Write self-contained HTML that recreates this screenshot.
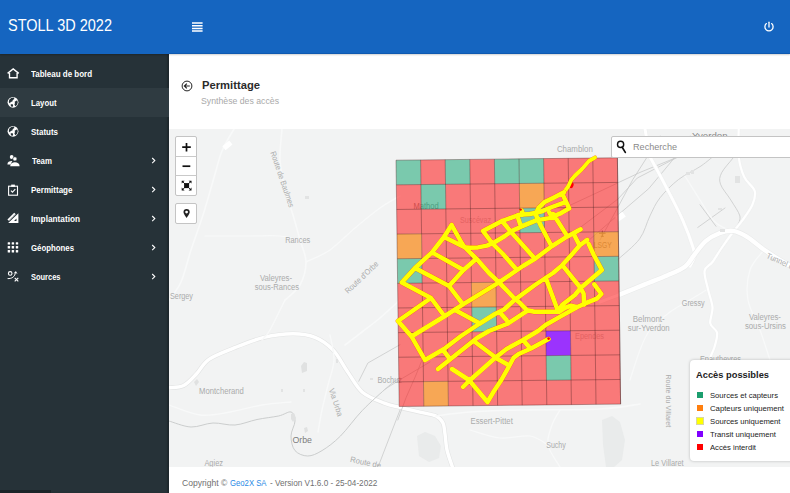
<!DOCTYPE html>
<html><head><meta charset="utf-8">
<style>
*{box-sizing:border-box;margin:0;padding:0}
html,body{width:790px;height:493px;overflow:hidden;background:#fff;font-family:"Liberation Sans",sans-serif;}
.t{position:absolute;white-space:pre;transform-origin:0 0;line-height:normal}
#hdr{position:absolute;left:0;top:0;width:790px;height:54px;background:#1565c0;box-shadow:0 1px 1.5px rgba(0,0,0,.18);z-index:5}
#side{position:absolute;left:0;top:54px;width:169px;height:439px;background:#263238;z-index:4;box-shadow:inset -2px 0 1.5px rgba(0,0,0,.22)}
#sel{position:absolute;left:0;top:34px;width:169px;height:29px;background:#2f3b41}
#map{position:absolute;left:169px;top:129px;width:621px;height:338px;background:#f2f3f3;overflow:hidden}
.ctl{position:absolute;background:#fff;border:1px solid #c4c4c4;border-radius:2px;z-index:2}
#legend{position:absolute;left:690px;top:360px;width:110px;height:101px;background:#fff;border-radius:4px;box-shadow:0 0 3px rgba(0,0,0,.25);z-index:2}
.sw{position:absolute;left:696.5px;width:6.6px;height:6.2px;z-index:3}
svg{position:absolute;overflow:visible}
</style></head><body>
<div id="hdr"><div style="position:absolute;left:169px;top:53px;width:621px;height:1px;background:#0f59b0"></div>
<svg style="left:192px;top:22px" width="11" height="10"><path d="M0 1.1h10.6M0 3.7h10.6M0 6.4h10.6M0 8.9h10.6" stroke="#fff" stroke-width="1.5" fill="none"/></svg>
<svg style="left:763px;top:21px" width="12" height="12"><path d="M3.4 2.6A4.1 4.1 0 1 0 8.6 2.6" stroke="#fff" stroke-width="1.3" fill="none" stroke-linecap="round"/><path d="M6 1.2V6" stroke="#fff" stroke-width="1.3" stroke-linecap="round"/></svg>
</div>
<div id="side"><div id="sel"></div><svg width="168" height="439" viewBox="0 54 168 439" style="left:0;top:0"><path d="M7.6 73.4L13.2 68.9L18.8 73.4M9.5 73V77.7H17.1V73" fill="none" stroke="#fff" stroke-width="1.35" stroke-linejoin="miter"/><circle cx="13" cy="102.3" r="5.4" fill="#fff"/><path d="M9.2 99.7l2-1.6l2.6 -0.6l0.6 1.4l-1.6 1l-0.4 1.6l-1.8 0.4l-0.6 1.6l-1.2-1.2z" fill="#263238"/><path d="M14.6 101.7l2.6-1.4l0.6 2l-0.8 2.6l-1.8 1.4l-0.8-1.8l0.6-1.4z" fill="#263238"/><path d="M10.6 104.5l1.8-0.4l0.8 1.4l-0.8 1.6l-1.4-0.8z" fill="#263238"/><circle cx="13" cy="131.3" r="5.4" fill="#fff"/><path d="M9.2 128.70000000000002l2-1.6l2.6 -0.6l0.6 1.4l-1.6 1l-0.4 1.6l-1.8 0.4l-0.6 1.6l-1.2-1.2z" fill="#263238"/><path d="M14.6 130.70000000000002l2.6-1.4l0.6 2l-0.8 2.6l-1.8 1.4l-0.8-1.8l0.6-1.4z" fill="#263238"/><path d="M10.6 133.5l1.8-0.4l0.8 1.4l-0.8 1.6l-1.4-0.8z" fill="#263238"/><circle cx="11.7" cy="157" r="1.9" fill="#fff"/><path d="M7.4 164.4c0-2.4 2-3.4 4.3-3.4l0.6 0.1l-1.8 3.3z" fill="#fff"/><circle cx="14.9" cy="158.9" r="2.1" fill="#fff" stroke="#263238" stroke-width="0.6"/><path d="M10.2 166.2c0-2.8 2.2-3.9 4.7-3.9s4.7 1.1 4.7 3.9z" fill="#fff"/><rect x="8.6" y="186.2" width="8.9" height="9" fill="none" stroke="#fff" stroke-width="1.1"/><rect x="11.2" y="184.6" width="3.7" height="2.2" fill="#fff"/><path d="M10.9 190.6l1.6 1.6l2.8-3.1" fill="none" stroke="#fff" stroke-width="1.1"/><path d="M8.2 223L18.4 213.2V223zM14 220.9h2.5v-2.5z" fill="#fff" fill-rule="evenodd"/><path d="M8.2 220.3L15 213.5" stroke="#fff" stroke-width="2.2"/><path d="M8.6 220.7L15.4 213.9" stroke="#263238" stroke-width="0.5" stroke-dasharray="0.6 0.6"/><rect x="7.7" y="242.20000000000002" width="2.4" height="2.4" rx="0.5" fill="#fff"/><rect x="7.7" y="246.10000000000002" width="2.4" height="2.4" rx="0.5" fill="#fff"/><rect x="7.7" y="250.10000000000002" width="2.4" height="2.4" rx="0.5" fill="#fff"/><rect x="11.700000000000001" y="242.20000000000002" width="2.4" height="2.4" rx="0.5" fill="#fff"/><rect x="11.700000000000001" y="246.10000000000002" width="2.4" height="2.4" rx="0.5" fill="#fff"/><rect x="11.700000000000001" y="250.10000000000002" width="2.4" height="2.4" rx="0.5" fill="#fff"/><rect x="15.8" y="242.20000000000002" width="2.4" height="2.4" rx="0.5" fill="#fff"/><rect x="15.8" y="246.10000000000002" width="2.4" height="2.4" rx="0.5" fill="#fff"/><rect x="15.8" y="250.10000000000002" width="2.4" height="2.4" rx="0.5" fill="#fff"/><circle cx="10.2" cy="273.4" r="1.8" fill="none" stroke="#fff" stroke-width="1.1"/><path d="M7.6 278.6c4 0.2 7.4-1.6 8-6.6M14.3 273.4l1.4-1.8l1.2 2" fill="none" stroke="#fff" stroke-width="1"/><path d="M14.7 277.8l3.6 3.6M18.3 277.8l-3.6 3.6" stroke="#fff" stroke-width="1.1"/><path d="M152.2 158.0l2.6 2.6l-2.6 2.6" fill="none" stroke="#fff" stroke-width="1.1"/><path d="M152.2 187.0l2.6 2.6l-2.6 2.6" fill="none" stroke="#fff" stroke-width="1.1"/><path d="M152.2 216.0l2.6 2.6l-2.6 2.6" fill="none" stroke="#fff" stroke-width="1.1"/><path d="M152.2 245.0l2.6 2.6l-2.6 2.6" fill="none" stroke="#fff" stroke-width="1.1"/><path d="M152.2 274.0l2.6 2.6l-2.6 2.6" fill="none" stroke="#fff" stroke-width="1.1"/></svg><div style="position:absolute;left:0;top:436px;width:51px;height:3px;background:#1b2428"></div></div>
<svg style="left:181px;top:79.5px;z-index:1" width="12" height="12"><circle cx="6" cy="6" r="4.9" fill="none" stroke="#222" stroke-width="1"/><path d="M8.8 6H3.6M5.8 3.6L3.4 6l2.4 2.4" fill="none" stroke="#222" stroke-width="1.2"/></svg>
<div id="map"><svg width="621" height="338" viewBox="169 129 621 338" style="left:0;top:0"><path d="M169 387.8C171.4 387.4 179.0 387.9 183.6 385.6C188.2 383.3 192.2 378.4 196.4 374C200.6 369.6 202.6 363.7 209 359.3C215.4 354.9 225.5 351.4 234.7 347.7C243.8 344.0 254.2 339.7 263.9 337.4C273.6 335.1 284.5 333.8 293 333.8C301.5 333.8 308.3 334.7 315 337.4C321.7 340.1 327.7 344.4 333.2 350.2C338.7 356.0 342.9 365.1 347.8 372.1C352.7 379.1 356.3 387.0 362.4 392.2C368.5 397.4 378.0 400.6 384.3 403.1C390.6 405.6 394.1 405.9 400 407.4C405.9 408.9 414.0 410.8 420 412.2C426.0 413.6 432.2 414.2 436 416C439.8 417.8 441.5 420.0 443 423C444.5 426.0 444.3 429.5 445 434C445.7 438.5 445.7 444.3 447 450C448.3 455.7 451.8 465.0 452.8 468" fill="none" stroke="#e3e4e4" stroke-width="4.6"/><path d="M169 387.8C171.4 387.4 179.0 387.9 183.6 385.6C188.2 383.3 192.2 378.4 196.4 374C200.6 369.6 202.6 363.7 209 359.3C215.4 354.9 225.5 351.4 234.7 347.7C243.8 344.0 254.2 339.7 263.9 337.4C273.6 335.1 284.5 333.8 293 333.8C301.5 333.8 308.3 334.7 315 337.4C321.7 340.1 327.7 344.4 333.2 350.2C338.7 356.0 342.9 365.1 347.8 372.1C352.7 379.1 356.3 387.0 362.4 392.2C368.5 397.4 378.0 400.6 384.3 403.1C390.6 405.6 394.1 405.9 400 407.4C405.9 408.9 414.0 410.8 420 412.2C426.0 413.6 432.2 414.2 436 416C439.8 417.8 441.5 420.0 443 423C444.5 426.0 444.3 429.5 445 434C445.7 438.5 445.7 444.3 447 450C448.3 455.7 451.8 465.0 452.8 468" fill="none" stroke="#fff" stroke-width="3.4"/><path d="M602 420l10-4l8 6l5 18l-3 20l-8 7h-8l-3-22z" fill="#e9ebeb"/><path d="M417 436l8-4l10 4l6 10l-2 12l-10 4l-10-6z" fill="#e6e7e7" opacity="0.7"/><path d="M600 240L618 207L632.8 179.6L646.5 158L660 136" fill="none" stroke="#c9caca" stroke-width="0.8" stroke-linecap="round"/><path d="M560 243L580.6 227.2L618 199L637.3 178L676 158L700 148" fill="none" stroke="#c9caca" stroke-width="0.8" stroke-linecap="round"/><path d="M560 210L602.8 190L640 172.4L667 161.4L720 140" fill="none" stroke="#c9caca" stroke-width="0.8" stroke-linecap="round"/><path d="M570 256L588.7 240.4L618 215L648.7 188.7L671.5 161.4L690 136" fill="none" stroke="#c9caca" stroke-width="0.8" stroke-linecap="round"/><path d="M618 259.4C621.6 256.0 634.3 246.1 639.6 238.9C644.9 231.7 646.5 222.8 649.9 216C653.3 209.2 655.2 203.9 660 197.8C664.8 191.7 671.6 184.9 678.4 179.6C685.2 174.3 694.7 170.3 701 166C707.3 161.7 713.5 156.0 716 154" fill="none" stroke="#c9caca" stroke-width="0.8" stroke-linecap="round"/><path d="M738 150C737.2 151.3 735.7 154.2 733 158C730.3 161.8 723.7 168.4 721.6 172.8C719.5 177.2 719.0 179.7 720.5 184.2C722.0 188.7 727.6 194.7 730.8 200C734.0 205.3 738.8 211.8 739.9 216C741.0 220.2 738.0 223.5 737.6 225" fill="none" stroke="#c9caca" stroke-width="0.8" stroke-linecap="round"/><path d="M700 204.7L716 226.3" fill="none" stroke="#c9caca" stroke-width="0.8" stroke-linecap="round"/><path d="M697.7 227.5L725 208" fill="none" stroke="#c9caca" stroke-width="0.8" stroke-linecap="round"/><path d="M169 421C172.7 422.0 183.7 426.7 191 427C198.3 427.3 205.7 423.3 213 423C220.3 422.7 227.7 425.6 235 425C242.3 424.4 249.8 421.0 257 419.5C264.2 418.0 272.8 417.2 278.5 416C284.2 414.8 288.2 411.2 291 412C293.8 412.8 295.0 417.0 295 421C295.0 425.0 291.0 431.1 291 436C291.0 440.9 292.2 447.3 295 450.6C297.8 453.9 303.2 456.0 307.7 456C312.2 456.0 316.5 453.9 322 450.6C327.5 447.3 333.8 442.7 340.5 436C347.2 429.3 354.5 418.6 362.4 410.4C370.3 402.2 381.7 392.2 388 386.7C394.3 381.2 398.0 379.1 400 377.6" fill="none" stroke="#c6c8c8" stroke-width="0.9" stroke-linecap="round"/><path d="M358.8 381.2L367.9 363L400 344.7" fill="none" stroke="#c9caca" stroke-width="0.8" stroke-linecap="round"/><path d="M400 410L378.8 465L376 470" fill="none" stroke="#c9caca" stroke-width="0.8" stroke-linecap="round"/><path d="M385 389.2L401 379.1L430 362" fill="none" stroke="#c9caca" stroke-width="0.8" stroke-linecap="round"/><path d="M397.8 420L406 397.8L416 375L424 355" fill="none" stroke="#c9caca" stroke-width="0.8" stroke-linecap="round"/><path d="M169 300C171.0 297.0 177.3 290.3 181 282C184.7 273.7 187.3 261.2 191 250C194.7 238.8 199.2 226.8 203 215C206.8 203.2 210.4 189.7 213.6 179C216.8 168.3 218.6 159.3 222 151C225.4 142.7 232.0 132.7 234 129" fill="none" stroke="#f8f9f9" stroke-width="1.6" stroke-linecap="round"/><path d="M282 129C281.7 134.2 279.5 149.8 280 160C280.5 170.2 282.8 180.8 285 190C287.2 199.2 290.5 206.7 293 215C295.5 223.3 297.8 232.2 300 240C302.2 247.8 306.0 254.5 306 262C306.0 269.5 303.5 278.7 300 285C296.5 291.3 287.5 297.5 285 300" fill="none" stroke="#f8f9f9" stroke-width="1.6" stroke-linecap="round"/><path d="M306 262C310.0 260.0 321.8 255.7 330 250C338.2 244.3 346.7 235.0 355 228C363.3 221.0 372.5 213.3 380 208C387.5 202.7 396.7 198.0 400 196" fill="none" stroke="#f8f9f9" stroke-width="1.4" stroke-linecap="round"/><path d="M285 300C282.5 305.0 273.8 323.3 270 330C266.2 336.7 263.3 338.3 262 340" fill="none" stroke="#f8f9f9" stroke-width="1.4" stroke-linecap="round"/><path d="M400 300C396.7 303.0 386.3 312.7 380 318C373.7 323.3 367.8 327.5 362 332C356.2 336.5 347.8 342.8 345 345" fill="none" stroke="#f8f9f9" stroke-width="1.6" stroke-linecap="round"/><path d="M300 240C296.7 239.3 288.3 236.7 280 236C271.7 235.3 262.5 236.0 250 236C237.5 236.0 212.5 236.0 205 236" fill="none" stroke="#f8f9f9" stroke-width="1.2" stroke-linecap="round"/><path d="M330 335C330.7 339.2 334.3 351.7 334 360C333.7 368.3 330.0 376.7 328 385C326.0 393.3 323.7 402.2 322 410C320.3 417.8 318.7 428.3 318 432" fill="none" stroke="#f8f9f9" stroke-width="1.4" stroke-linecap="round"/><path d="M169 405C174.2 406.7 189.8 413.8 200 415C210.2 416.2 219.7 413.7 230 412C240.3 410.3 251.8 406.7 262 405C272.2 403.3 286.2 402.5 291 402" fill="none" stroke="#f8f9f9" stroke-width="1.3" stroke-linecap="round"/><path d="M436 416C441.7 415.3 456.0 413.0 470 412C484.0 411.0 498.3 410.5 520 410C541.7 409.5 580.0 410.0 600 409C620.0 408.0 633.3 404.8 640 404" fill="none" stroke="#f8f9f9" stroke-width="1.6" stroke-linecap="round"/><path d="M560 410C558.7 412.5 554.0 419.2 552 425C550.0 430.8 546.7 438.0 548 445C549.3 452.0 558.0 463.3 560 467" fill="none" stroke="#f8f9f9" stroke-width="1.3" stroke-linecap="round"/><path d="M470 430C475.0 431.3 490.0 437.0 500 438C510.0 439.0 522.0 434.8 530 436C538.0 437.2 545.0 443.5 548 445" fill="none" stroke="#f8f9f9" stroke-width="1.2" stroke-linecap="round"/><path d="M685 176C687.5 180.0 695.0 192.3 700 200C705.0 207.7 709.5 216.7 715 222C720.5 227.3 730.0 230.3 733 232" fill="none" stroke="#f8f9f9" stroke-width="1.3" stroke-linecap="round"/><path d="M764 250C761.7 253.3 752.7 261.7 750 270C747.3 278.3 746.3 290.0 748 300C749.7 310.0 756.3 320.0 760 330C763.7 340.0 768.3 355.0 770 360" fill="none" stroke="#f8f9f9" stroke-width="1.3" stroke-linecap="round"/><path d="M708 289C705.0 290.8 696.3 296.2 690 300C683.7 303.8 676.7 307.0 670 312C663.3 317.0 655.0 323.7 650 330C645.0 336.3 643.3 341.7 640 350C636.7 358.3 631.7 375.0 630 380" fill="none" stroke="#f8f9f9" stroke-width="1.2" stroke-linecap="round"/><path d="M649.9 156.8C652.8 162.1 661.5 178.1 667 188.7C672.5 199.3 678.5 210.7 682.9 220.6C687.3 230.5 691.3 241.9 693.2 248C695.1 254.1 694.8 254.1 694.3 257.1C693.8 260.1 690.7 264.5 690 266" fill="none" stroke="#eeefef" stroke-width="4.2"/><path d="M649.9 156.8C652.8 162.1 661.5 178.1 667 188.7C672.5 199.3 678.5 210.7 682.9 220.6C687.3 230.5 691.3 241.9 693.2 248C695.1 254.1 694.8 254.1 694.3 257.1C693.8 260.1 690.7 264.5 690 266" fill="none" stroke="#fff" stroke-width="3.0" stroke-linecap="round"/><path d="M645 129C645.8 133.6 649.1 152.2 649.9 156.8" fill="none" stroke="#eeefef" stroke-width="4.2"/><path d="M645 129C645.8 133.6 649.1 152.2 649.9 156.8" fill="none" stroke="#fff" stroke-width="3.0" stroke-linecap="round"/><path d="M738.7 129C738.7 133.6 737.8 148.8 738.7 156.8C739.7 164.9 741.7 171.6 744.4 177.3C747.1 183.0 753.4 186.4 754.7 191C756.0 195.6 754.5 199.8 752.4 204.7C750.3 209.6 745.4 216.0 742.2 220.6C739.0 225.2 736.4 227.4 733 232C729.6 236.6 725.0 243.0 721.6 248C718.2 253.0 715.3 258.2 712.5 262C709.7 265.8 705.4 266.5 704.6 271C703.9 275.5 706.7 283.1 708 289.2C709.3 295.3 712.1 301.7 712.5 307.4C712.9 313.1 709.5 319.2 710.3 323.4C711.0 327.6 716.2 328.7 717 332.5C717.8 336.3 715.9 341.8 714.8 346C713.7 350.2 711.8 353.2 710.3 357.5C708.8 361.8 706.7 369.6 706 372" fill="none" stroke="#eff0f0" stroke-width="3.4000000000000004"/><path d="M738.7 129C738.7 133.6 737.8 148.8 738.7 156.8C739.7 164.9 741.7 171.6 744.4 177.3C747.1 183.0 753.4 186.4 754.7 191C756.0 195.6 754.5 199.8 752.4 204.7C750.3 209.6 745.4 216.0 742.2 220.6C739.0 225.2 736.4 227.4 733 232C729.6 236.6 725.0 243.0 721.6 248C718.2 253.0 715.3 258.2 712.5 262C709.7 265.8 705.4 266.5 704.6 271C703.9 275.5 706.7 283.1 708 289.2C709.3 295.3 712.1 301.7 712.5 307.4C712.9 313.1 709.5 319.2 710.3 323.4C711.0 327.6 716.2 328.7 717 332.5C717.8 336.3 715.9 341.8 714.8 346C713.7 350.2 711.8 353.2 710.3 357.5C708.8 361.8 706.7 369.6 706 372" fill="none" stroke="#fff" stroke-width="2.2" stroke-linecap="round"/><path d="M619 294.9C623.2 293.2 636.2 287.8 644.2 284.6C652.2 281.4 660.2 278.5 667 275.5C673.8 272.5 680.7 269.8 685.2 266.4C689.8 262.9 690.9 259.0 694.3 254.8C697.7 250.6 701.5 244.7 705.7 241.1C709.9 237.5 714.9 234.9 719.4 233.2C723.9 231.5 728.5 230.3 733 230.9C737.5 231.5 741.4 233.4 746.7 236.6C752.0 239.8 758.8 246.1 764.9 250.3C771.0 254.5 778.2 259.1 783.2 262C788.2 264.9 793.0 267.0 795 268" fill="none" stroke="#eaebeb" stroke-width="5.6000000000000005"/><path d="M619 294.9C623.2 293.2 636.2 287.8 644.2 284.6C652.2 281.4 660.2 278.5 667 275.5C673.8 272.5 680.7 269.8 685.2 266.4C689.8 262.9 690.9 259.0 694.3 254.8C697.7 250.6 701.5 244.7 705.7 241.1C709.9 237.5 714.9 234.9 719.4 233.2C723.9 231.5 728.5 230.3 733 230.9C737.5 231.5 741.4 233.4 746.7 236.6C752.0 239.8 758.8 246.1 764.9 250.3C771.0 254.5 778.2 259.1 783.2 262C788.2 264.9 793.0 267.0 795 268" fill="none" stroke="#fff" stroke-width="4.4" stroke-linecap="round"/><path d="M600 302C603.2 300.8 615.8 296.1 619 294.9" fill="none" stroke="#eeefef" stroke-width="4.2"/><path d="M600 302C603.2 300.8 615.8 296.1 619 294.9" fill="none" stroke="#fff" stroke-width="3.0" stroke-linecap="round"/><rect x="223" y="143" width="9" height="5" fill="#fff" transform="rotate(-40 227.3 145.6)"/><rect x="616" y="214" width="9" height="6" fill="#fff" transform="rotate(-35 620 217)"/><rect x="305" y="196" width="4" height="3" fill="#e2e3e3"/><rect x="686" y="172" width="4" height="3" fill="#e2e3e3"/><rect x="691" y="170" width="3" height="4" fill="#e2e3e3"/><rect x="735" y="176" width="5" height="7" fill="#e2e3e3"/><rect x="720" y="229" width="5" height="3" fill="#e2e3e3"/><rect x="718" y="208" width="4" height="2" fill="#e2e3e3"/><rect x="281" y="389" width="2" height="3" fill="#e2e3e3"/><rect x="303" y="389" width="2" height="3" fill="#e2e3e3"/><rect x="370" y="378" width="3" height="2" fill="#e2e3e3"/><rect x="336" y="359" width="2" height="4" fill="#e2e3e3"/><path d="M301 366l3-4l3 1l0 8l-5 2zM194 382l3-3l2 3l-3 4zM291 414l3-1l2 5l-3 4l-2-3zM304 428l3-1l1 4l-3 2z" fill="#e0e1e1"/><g font-family="Liberation Sans,sans-serif"><text x="285.2" y="242.6" font-size="8.4" fill="#aaabab" textLength="25.0" lengthAdjust="spacingAndGlyphs">Rances</text><text x="259.9" y="281.0" font-size="8.4" fill="#aaabab" textLength="32.1" lengthAdjust="spacingAndGlyphs">Valeyres-</text><text x="254.7" y="290.2" font-size="8.4" fill="#aaabab" textLength="44.3" lengthAdjust="spacingAndGlyphs">sous-Rances</text><text x="170" y="298.5" font-size="8.4" fill="#aaabab" textLength="23.0" lengthAdjust="spacingAndGlyphs">Sergey</text><text x="0" y="2.9" font-size="8.0" fill="#aaabab" textLength="58.7" lengthAdjust="spacingAndGlyphs" transform="translate(273 151.5) rotate(71.1)">Route de Baulmes</text><text x="0" y="2.9" font-size="8.0" fill="#aaabab" textLength="42.8" lengthAdjust="spacingAndGlyphs" transform="translate(346 292) rotate(-43.6)">Route d'Orbe</text><text x="199" y="393.7" font-size="8.4" fill="#aaabab" textLength="44.8" lengthAdjust="spacingAndGlyphs">Montcherand</text><text x="0" y="2.9" font-size="8.0" fill="#aaabab" textLength="29.0" lengthAdjust="spacingAndGlyphs" transform="translate(331.4 388.5) rotate(71.7)">Via Urba</text><text x="292.4" y="442.9" font-size="9.3" fill="#7d7d7d" textLength="19.6" lengthAdjust="spacingAndGlyphs">Orbe</text><text x="204.4" y="465.6" font-size="8.4" fill="#aaabab" textLength="18.6" lengthAdjust="spacingAndGlyphs">Agiez</text><text x="0" y="2.9" font-size="8.0" fill="#aaabab" textLength="31.3" lengthAdjust="spacingAndGlyphs" transform="translate(350.4 459) rotate(12.0)">Route de</text><text x="377.4" y="382.8" font-size="8.4" fill="#aaabab" textLength="24.6" lengthAdjust="spacingAndGlyphs">Bochuz</text><text x="470.5" y="423.5" font-size="8.4" fill="#aaabab" textLength="42.3" lengthAdjust="spacingAndGlyphs">Essert-Pittet</text><text x="546.2" y="447.8" font-size="8.4" fill="#aaabab" textLength="19.6" lengthAdjust="spacingAndGlyphs">Suchy</text><text x="651" y="465.5" font-size="8.4" fill="#aaabab" textLength="32.6" lengthAdjust="spacingAndGlyphs">Le Villaret</text><text x="0" y="2.9" font-size="8.0" fill="#aaabab" textLength="52.9" lengthAdjust="spacingAndGlyphs" transform="translate(668.5 374.4) rotate(90.0)">Route du Villaret</text><text x="681.8" y="306.3" font-size="8.4" fill="#aaabab" textLength="22.8" lengthAdjust="spacingAndGlyphs">Gressy</text><text x="632.8" y="321.8" font-size="8.4" fill="#aaabab" textLength="31.9" lengthAdjust="spacingAndGlyphs">Belmont-</text><text x="627.8" y="330.5" font-size="8.4" fill="#aaabab" textLength="41.9" lengthAdjust="spacingAndGlyphs">sur-Yverdon</text><text x="749" y="320.0" font-size="8.4" fill="#aaabab" textLength="31.9" lengthAdjust="spacingAndGlyphs">Valeyres-</text><text x="744.9" y="328.6" font-size="8.4" fill="#aaabab" textLength="41.0" lengthAdjust="spacingAndGlyphs">sous-Ursins</text><text x="700" y="362.4" font-size="8.4" fill="#aaabab" textLength="41.0" lengthAdjust="spacingAndGlyphs">Epautheyres</text><text x="0" y="2.9" font-size="8.0" fill="#aaabab" textLength="32.9" lengthAdjust="spacingAndGlyphs" transform="translate(767 255) rotate(24.2)">Tunnel de</text><text x="556.9" y="151.7" font-size="8.4" fill="#aaabab" textLength="35.9" lengthAdjust="spacingAndGlyphs">Chamblon</text><text x="413.4" y="208.5" font-size="8.4" fill="#9a9a9a" textLength="25.2" lengthAdjust="spacingAndGlyphs">Mathod</text><text x="460" y="223.0" font-size="8.4" fill="#c6c6c6" textLength="31.0" lengthAdjust="spacingAndGlyphs">Suscévaz</text><text x="593.8" y="247.8" font-size="8.4" fill="#8e8e8e" textLength="17.9" lengthAdjust="spacingAndGlyphs">LSGY</text><text x="575" y="339.0" font-size="8.4" fill="#c6c6c6" textLength="29.0" lengthAdjust="spacingAndGlyphs">Ependes</text><path d="M602.3 230.5v6M599 233.3h6.6M600.8 236.3h3" stroke="#8e8e8e" stroke-width="1" fill="none"/><text x="692" y="138.8" font-size="9.6" fill="#8a8a8a" textLength="38.8" lengthAdjust="spacingAndGlyphs">Yverdon-</text></g><g transform="matrix(24.6000,-0.2667,0.3200,24.6300,396.0,160.2)"><path d="M1 0h1v1h-1zM3 0h1v1h-1zM6 0h1v1h-1zM7 0h1v1h-1zM8 0h1v1h-1zM0 1h1v1h-1zM2 1h1v1h-1zM3 1h1v1h-1zM4 1h1v1h-1zM6 1h1v1h-1zM7 1h1v1h-1zM8 1h1v1h-1zM0 2h1v1h-1zM1 2h1v1h-1zM2 2h1v1h-1zM3 2h1v1h-1zM4 2h1v1h-1zM6 2h1v1h-1zM7 2h1v1h-1zM8 2h1v1h-1zM1 3h1v1h-1zM2 3h1v1h-1zM3 3h1v1h-1zM4 3h1v1h-1zM5 3h1v1h-1zM6 3h1v1h-1zM7 3h1v1h-1zM1 4h1v1h-1zM2 4h1v1h-1zM3 4h1v1h-1zM4 4h1v1h-1zM5 4h1v1h-1zM6 4h1v1h-1zM7 4h1v1h-1zM0 5h1v1h-1zM1 5h1v1h-1zM2 5h1v1h-1zM4 5h1v1h-1zM5 5h1v1h-1zM6 5h1v1h-1zM7 5h1v1h-1zM8 5h1v1h-1zM0 6h1v1h-1zM1 6h1v1h-1zM2 6h1v1h-1zM4 6h1v1h-1zM5 6h1v1h-1zM6 6h1v1h-1zM7 6h1v1h-1zM8 6h1v1h-1zM0 7h1v1h-1zM1 7h1v1h-1zM2 7h1v1h-1zM3 7h1v1h-1zM4 7h1v1h-1zM5 7h1v1h-1zM7 7h1v1h-1zM8 7h1v1h-1zM0 8h1v1h-1zM1 8h1v1h-1zM2 8h1v1h-1zM3 8h1v1h-1zM4 8h1v1h-1zM5 8h1v1h-1zM7 8h1v1h-1zM8 8h1v1h-1zM0 9h1v1h-1zM2 9h1v1h-1zM3 9h1v1h-1zM4 9h1v1h-1zM5 9h1v1h-1zM6 9h1v1h-1zM7 9h1v1h-1zM8 9h1v1h-1z" fill="#ff0000" fill-opacity="0.5"/><rect x="0" y="0" width="1" height="1" fill="#029f67" fill-opacity="0.5"/><rect x="2" y="0" width="1" height="1" fill="#029f67" fill-opacity="0.5"/><rect x="4" y="0" width="1" height="1" fill="#029f67" fill-opacity="0.5"/><rect x="5" y="0" width="1" height="1" fill="#029f67" fill-opacity="0.5"/><rect x="1" y="1" width="1" height="1" fill="#029f67" fill-opacity="0.5"/><rect x="5" y="2" width="1" height="1" fill="#029f67" fill-opacity="0.5"/><rect x="0" y="4" width="1" height="1" fill="#029f67" fill-opacity="0.5"/><rect x="8" y="4" width="1" height="1" fill="#029f67" fill-opacity="0.5"/><rect x="3" y="6" width="1" height="1" fill="#029f67" fill-opacity="0.5"/><rect x="6" y="8" width="1" height="1" fill="#029f67" fill-opacity="0.5"/><rect x="5" y="1" width="1" height="1" fill="#f98611" fill-opacity="0.7"/><rect x="0" y="3" width="1" height="1" fill="#f98611" fill-opacity="0.7"/><rect x="8" y="3" width="1" height="1" fill="#f98611" fill-opacity="0.7"/><rect x="3" y="5" width="1" height="1" fill="#f98611" fill-opacity="0.7"/><rect x="1" y="9" width="1" height="1" fill="#f98611" fill-opacity="0.7"/><rect x="6" y="7" width="1" height="1" fill="#8403ff" fill-opacity="0.8"/><path d="M0 0V10M1 0V10M2 0V10M3 0V10M4 0V10M5 0V10M6 0V10M7 0V10M8 0V10M9 0V10M0 0H9M0 1H9M0 2H9M0 3H9M0 4H9M0 5H9M0 6H9M0 7H9M0 8H9M0 9H9M0 10H9M9 0V10" fill="none" stroke="#4a1f1f" stroke-opacity="0.45" stroke-width="0.034"/></g><ellipse cx="571.3" cy="185.3" rx="2.2" ry="3" fill="#ff0000" transform="rotate(20 571.3 185.3)"/><path d="M595 157.6L589 161L582 169L574.6 176L571.2 180L568.2 186.5L564 192.2" fill="none" stroke="#ff0000" stroke-opacity="0.5" stroke-width="4.3" stroke-linecap="round" stroke-linejoin="round"/><path d="M595 157.6L589 161L582 169L574.6 176L571.2 180L568.2 186.5L564 192.2" fill="none" stroke="#ffff00" stroke-width="3.9" stroke-linecap="round" stroke-linejoin="round"/><path d="M564 192.2L554 197.4L544.2 202.3L538.8 207.6L535.5 214L541 226L551.2 245.5M562.7 194.6L569.2 208.4M483 231L502 221L520 214.7L530 214L541 211.6L552 207L566.1 201.9M569.2 208.4L559.9 213.7L549.3 218.1L536.2 220.4L521 226.7L511.5 231.1L505 236L494.5 242.2L487 245.6L478 247.4L470 247.8L464.5 247.3M521.7 210.5L523 214.7M483 231L492 243L503 254L517 270M502 221L511.5 232.4L535 258.8M517.2 215.3L521 226.7M549.3 212.4L552.6 218M553.2 214L567.4 236.4M411.5 336.5L445 316L463 304.4L499 282.4L523 266L535.5 258.5L552.2 246L567.4 236.4L580.6 229.3M425 360L444 349L461 336L479 324L495 314L504 309.5L515 299.6L535 285L553 273L562.3 265.1L571.4 255L579.6 245.5L587.2 239.9M574.5 235.4L579.6 245.5M451.6 225L444 237L432 252.4L415 268L401.8 282.6M444 237L464.2 247M432 252.4L463.5 270M415 268L449 286M401.8 282.6L431 298L444 315.5M431 298L398 321L411.5 336.5L425 360M451.6 225L462 243.5L464.5 247L476.5 258.8L489 273L499 282.4L515 299L519.1 302.2L527.2 310.3L534.3 311.8L557.7 311.8L562.3 304.7L574.9 295L580.6 288L601.9 270L593.8 255L588.7 244M476.5 258.8L463.5 270L449 286L463 304.4M562.3 265.1L580.6 288L583.6 293.5L584.1 304.7M546.1 278.8L557.7 310.3M499.5 312L506.5 320M455 310L479 323M438 369L477 338L489 331L507 324L527.2 310.8M443 350L450 359M475 342L495 357M594.3 284.4L601.4 294L596.8 298.6L584.6 303.7L576.9 307.2L560.7 316.4L545.5 325L538 331L523 340L506.5 349L495 358L469 381L463 387M559 311.8L565 307.8L571 305.6L576.5 307M452 369L469 380L487.5 402M487.5 402L494 391L501 380.5L509.2 366L513.6 357.8L518.6 354L531 348.5L548.5 339M495 357.6L509.3 365.4M523 340L530 348" fill="none" stroke="#ff0000" stroke-opacity="0.5" stroke-width="4.9" stroke-linecap="round" stroke-linejoin="round"/><path d="M564 192.2L554 197.4L544.2 202.3L538.8 207.6L535.5 214L541 226L551.2 245.5M562.7 194.6L569.2 208.4M483 231L502 221L520 214.7L530 214L541 211.6L552 207L566.1 201.9M569.2 208.4L559.9 213.7L549.3 218.1L536.2 220.4L521 226.7L511.5 231.1L505 236L494.5 242.2L487 245.6L478 247.4L470 247.8L464.5 247.3M521.7 210.5L523 214.7M483 231L492 243L503 254L517 270M502 221L511.5 232.4L535 258.8M517.2 215.3L521 226.7M549.3 212.4L552.6 218M553.2 214L567.4 236.4M411.5 336.5L445 316L463 304.4L499 282.4L523 266L535.5 258.5L552.2 246L567.4 236.4L580.6 229.3M425 360L444 349L461 336L479 324L495 314L504 309.5L515 299.6L535 285L553 273L562.3 265.1L571.4 255L579.6 245.5L587.2 239.9M574.5 235.4L579.6 245.5M451.6 225L444 237L432 252.4L415 268L401.8 282.6M444 237L464.2 247M432 252.4L463.5 270M415 268L449 286M401.8 282.6L431 298L444 315.5M431 298L398 321L411.5 336.5L425 360M451.6 225L462 243.5L464.5 247L476.5 258.8L489 273L499 282.4L515 299L519.1 302.2L527.2 310.3L534.3 311.8L557.7 311.8L562.3 304.7L574.9 295L580.6 288L601.9 270L593.8 255L588.7 244M476.5 258.8L463.5 270L449 286L463 304.4M562.3 265.1L580.6 288L583.6 293.5L584.1 304.7M546.1 278.8L557.7 310.3M499.5 312L506.5 320M455 310L479 323M438 369L477 338L489 331L507 324L527.2 310.8M443 350L450 359M475 342L495 357M594.3 284.4L601.4 294L596.8 298.6L584.6 303.7L576.9 307.2L560.7 316.4L545.5 325L538 331L523 340L506.5 349L495 358L469 381L463 387M559 311.8L565 307.8L571 305.6L576.5 307M452 369L469 380L487.5 402M487.5 402L494 391L501 380.5L509.2 366L513.6 357.8L518.6 354L531 348.5L548.5 339M495 357.6L509.3 365.4M523 340L530 348" fill="none" stroke="#ffff00" stroke-width="4.5" stroke-linecap="round" stroke-linejoin="round"/><circle cx="520.6" cy="209.6" r="1.2" fill="#ff0000"/><circle cx="548.6" cy="338.6" r="1.3" fill="#ff0000"/></svg></div>
<div class="ctl" style="left:175px;top:136px;width:22px;height:60px"></div>
<div class="ctl" style="left:175px;top:203px;width:22px;height:21px"></div>
<div class="ctl" style="left:611px;top:136px;width:181px;height:21.5px"></div>
<svg width="790" height="493" style="left:0;top:0;z-index:3;pointer-events:none"><path d="M182.2 147.2h8.6M186.5 142.9v8.6" stroke="#111" stroke-width="1.7"/><path d="M182.5 166.2h7.8" stroke="#111" stroke-width="1.7"/><path d="M175.5 156.5h21M175.5 175.5h21" stroke="#c9c9c9" stroke-width="1"/><path d="M182.6 181.6l8 8M190.6 181.6l-8 8" stroke="#111" stroke-width="0.9"/><rect x="184.1" y="183.1" width="5" height="5" fill="#111"/><path d="M181.7 180.7h2.9l-2.9 2.9zM191.5 180.7h-2.9l2.9 2.9zM181.7 190.5h2.9l-2.9-2.9zM191.5 190.5h-2.9l2.9-2.9z" fill="#111"/><path d="M186.6 209a3.1 3.1 0 0 1 3.1 3.1c0 2.2-3.1 5.9-3.1 5.9s-3.1-3.7-3.1-5.9a3.1 3.1 0 0 1 3.1-3.1z" fill="#222"/><circle cx="186.6" cy="212.1" r="1.4" fill="#fff"/><circle cx="620.6" cy="144.4" r="3.1" fill="none" stroke="#111" stroke-width="1.4"/><path d="M622.2 147.2l3.1 5.2" stroke="#111" stroke-width="1.7" stroke-linecap="round"/></svg>
<div id="legend"></div>
<div class="sw" style="top:392px;background:#1b9e6e"></div>
<div class="sw" style="top:405px;background:#ff7f0e"></div>
<div class="sw" style="top:417.9px;background:#ffff00;outline:0.5px solid #d8d8a0"></div>
<div class="sw" style="top:430.8px;background:#8000ff"></div>
<div class="sw" style="top:443.6px;background:#ff0000"></div>
<span class="t" style="left:7.6px;top:16.22px;font-size:17px;font-weight:normal;color:#fff;transform:scaleX(0.8530);z-index:6">STOLL 3D 2022</span><span class="t" style="left:31px;top:68.66px;font-size:9px;font-weight:bold;color:#fff;transform:scaleX(0.8861);z-index:6">Tableau de bord</span><span class="t" style="left:31px;top:97.66px;font-size:9px;font-weight:bold;color:#fff;transform:scaleX(0.8639);z-index:6">Layout</span><span class="t" style="left:31px;top:126.65px;font-size:9px;font-weight:bold;color:#fff;transform:scaleX(0.8848);z-index:6">Statuts</span><span class="t" style="left:32.3px;top:155.65px;font-size:9px;font-weight:bold;color:#fff;transform:scaleX(0.8755);z-index:6">Team</span><span class="t" style="left:31px;top:184.65px;font-size:9px;font-weight:bold;color:#fff;transform:scaleX(0.8919);z-index:6">Permittage</span><span class="t" style="left:31px;top:213.65px;font-size:9px;font-weight:bold;color:#fff;transform:scaleX(0.9159);z-index:6">Implantation</span><span class="t" style="left:31px;top:242.65px;font-size:9px;font-weight:bold;color:#fff;transform:scaleX(0.8684);z-index:6">Géophones</span><span class="t" style="left:31px;top:271.66px;font-size:9px;font-weight:bold;color:#fff;transform:scaleX(0.8303);z-index:6">Sources</span><span class="t" style="left:202.2px;top:78.56px;font-size:11.2px;font-weight:bold;color:#2b2b2b;transform:scaleX(1.0030);">Permittage</span><span class="t" style="left:201.3px;top:96.38px;font-size:9.3px;font-weight:normal;color:#a9a9a9;transform:scaleX(0.9373);">Synthèse des accès</span><span class="t" style="left:181.6px;top:478.36px;font-size:9px;font-weight:normal;color:#707070;transform:scaleX(0.9527);">Copyright ©</span><span class="t" style="left:230.4px;top:478.36px;font-size:9px;font-weight:normal;color:#2a8be6;transform:scaleX(0.8582);">Geo2X SA</span><span class="t" style="left:269.7px;top:478.36px;font-size:9px;font-weight:normal;color:#707070;transform:scaleX(0.9087);">- Version V1.6.0 - 25-04-2022</span><span class="t" style="left:633px;top:141.93px;font-size:8.7px;font-weight:normal;color:#8a8a8a;transform:scaleX(1.0472);z-index:3">Recherche</span><span class="t" style="left:696.3px;top:368.91px;font-size:9.6px;font-weight:bold;color:#222;transform:scaleX(0.9707);z-index:3">Accès possibles</span><span class="t" style="left:709.9px;top:391.26px;font-size:8px;font-weight:normal;color:#222;transform:scaleX(0.9556);z-index:3">Sources et capteurs</span><span class="t" style="left:709.9px;top:404.26px;font-size:8px;font-weight:normal;color:#222;transform:scaleX(0.9673);z-index:3">Capteurs uniquement</span><span class="t" style="left:709.9px;top:417.16px;font-size:8px;font-weight:normal;color:#222;transform:scaleX(0.9606);z-index:3">Sources uniquement</span><span class="t" style="left:709.9px;top:430.06px;font-size:8px;font-weight:normal;color:#222;transform:scaleX(0.9679);z-index:3">Transit uniquement</span><span class="t" style="left:709.9px;top:442.86px;font-size:8px;font-weight:normal;color:#222;transform:scaleX(0.9577);z-index:3">Accès interdit</span>
</body></html>
